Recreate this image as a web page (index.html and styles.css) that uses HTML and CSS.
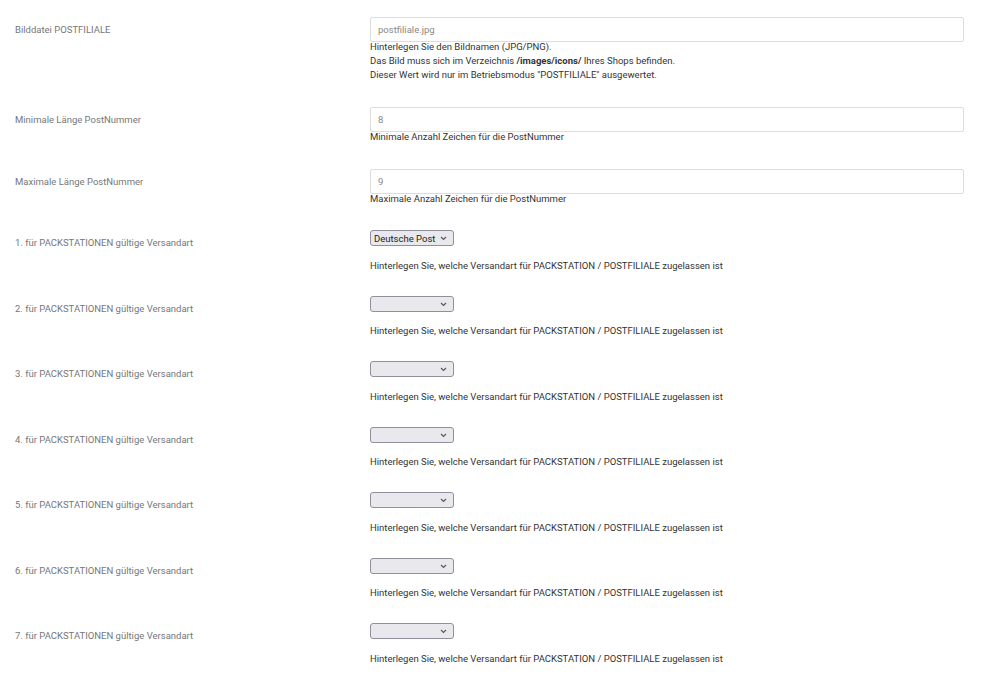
FILE: index.html
```html
<!DOCTYPE html>
<html lang="de">
<head>
  <meta charset="UTF-8">
  <title>Versandmodul Einstellungen</title>
  <link rel="stylesheet" href="styles.css">
</head>
<body>

  <div class="config">

    <div class="row text-row">
      <div class="label">Bilddatei POSTFILIALE</div>
      <div class="field">
        <input class="text-input" type="text" value="postfiliale.jpg">
        <div class="help">
          Hinterlegen Sie den Bildnamen (JPG/PNG).<br>
          Das Bild muss sich im Verzeichnis <b>/images/icons/</b> Ihres Shops befinden.<br>
          Dieser Wert wird nur im Betriebsmodus "POSTFILIALE" ausgewertet.
        </div>
      </div>
    </div>

    <div class="row text-row">
      <div class="label">Minimale Länge PostNummer</div>
      <div class="field">
        <input class="text-input" type="text" value="8">
        <div class="help">Minimale Anzahl Zeichen für die PostNummer</div>
      </div>
    </div>

    <div class="row text-row last-text">
      <div class="label">Maximale Länge PostNummer</div>
      <div class="field">
        <input class="text-input" type="text" value="9">
        <div class="help">Maximale Anzahl Zeichen für die PostNummer</div>
      </div>
    </div>

    <div class="row select-row">
      <div class="label">1. für PACKSTATIONEN gültige Versandart</div>
      <div class="field">
        <div class="select-wrap">
          <select class="ship-select"><option>Deutsche Post</option></select>
          <svg class="chevron" width="7" height="5" viewBox="0 0 7 5"><path d="M1 1l2.5 2.5L6 1" fill="none" stroke="#555" stroke-width="1.1"/></svg>
        </div>
        <div class="help">Hinterlegen Sie, welche Versandart für PACKSTATION / POSTFILIALE zugelassen ist</div>
      </div>
    </div>

    <div class="row select-row">
      <div class="label">2. für PACKSTATIONEN gültige Versandart</div>
      <div class="field">
        <div class="select-wrap">
          <select class="ship-select"><option></option></select>
          <svg class="chevron" width="7" height="5" viewBox="0 0 7 5"><path d="M1 1l2.5 2.5L6 1" fill="none" stroke="#555" stroke-width="1.1"/></svg>
        </div>
        <div class="help">Hinterlegen Sie, welche Versandart für PACKSTATION / POSTFILIALE zugelassen ist</div>
      </div>
    </div>

    <div class="row select-row">
      <div class="label">3. für PACKSTATIONEN gültige Versandart</div>
      <div class="field">
        <div class="select-wrap">
          <select class="ship-select"><option></option></select>
          <svg class="chevron" width="7" height="5" viewBox="0 0 7 5"><path d="M1 1l2.5 2.5L6 1" fill="none" stroke="#555" stroke-width="1.1"/></svg>
        </div>
        <div class="help">Hinterlegen Sie, welche Versandart für PACKSTATION / POSTFILIALE zugelassen ist</div>
      </div>
    </div>

    <div class="row select-row">
      <div class="label">4. für PACKSTATIONEN gültige Versandart</div>
      <div class="field">
        <div class="select-wrap">
          <select class="ship-select"><option></option></select>
          <svg class="chevron" width="7" height="5" viewBox="0 0 7 5"><path d="M1 1l2.5 2.5L6 1" fill="none" stroke="#555" stroke-width="1.1"/></svg>
        </div>
        <div class="help">Hinterlegen Sie, welche Versandart für PACKSTATION / POSTFILIALE zugelassen ist</div>
      </div>
    </div>

    <div class="row select-row">
      <div class="label">5. für PACKSTATIONEN gültige Versandart</div>
      <div class="field">
        <div class="select-wrap">
          <select class="ship-select"><option></option></select>
          <svg class="chevron" width="7" height="5" viewBox="0 0 7 5"><path d="M1 1l2.5 2.5L6 1" fill="none" stroke="#555" stroke-width="1.1"/></svg>
        </div>
        <div class="help">Hinterlegen Sie, welche Versandart für PACKSTATION / POSTFILIALE zugelassen ist</div>
      </div>
    </div>

    <div class="row select-row">
      <div class="label">6. für PACKSTATIONEN gültige Versandart</div>
      <div class="field">
        <div class="select-wrap">
          <select class="ship-select"><option></option></select>
          <svg class="chevron" width="7" height="5" viewBox="0 0 7 5"><path d="M1 1l2.5 2.5L6 1" fill="none" stroke="#555" stroke-width="1.1"/></svg>
        </div>
        <div class="help">Hinterlegen Sie, welche Versandart für PACKSTATION / POSTFILIALE zugelassen ist</div>
      </div>
    </div>

    <div class="row select-row">
      <div class="label">7. für PACKSTATIONEN gültige Versandart</div>
      <div class="field">
        <div class="select-wrap">
          <select class="ship-select"><option></option></select>
          <svg class="chevron" width="7" height="5" viewBox="0 0 7 5"><path d="M1 1l2.5 2.5L6 1" fill="none" stroke="#555" stroke-width="1.1"/></svg>
        </div>
        <div class="help">Hinterlegen Sie, welche Versandart für PACKSTATION / POSTFILIALE zugelassen ist</div>
      </div>
    </div>

  </div>

</body>
</html>
```

FILE: styles.css
```css
body {
  margin: 0;
  background: #fff;
  font-family: Roboto, "Liberation Sans", sans-serif;
  font-size: 9.5px;
  color: #333;
}

.config {
  padding: 17px 0 0 15px;
}

.row {
  display: flex;
}

.text-row {
  margin-bottom: 25px;
}

.last-text {
  margin-bottom: 24px;
}

.select-row {
  margin-bottom: 23px;
}

.label {
  width: 355px;
  flex-shrink: 0;
  color: #777;
  padding-top: 7px;
  line-height: 12px;
}

.field {
  width: 594px;
}

.text-input {
  display: block;
  box-sizing: border-box;
  width: 594px;
  height: 25px;
  margin: 0;
  padding: 0 7px;
  border: 1px solid #ddd;
  border-radius: 2px;
  font-family: inherit;
  font-size: 9.5px;
  color: #888;
  background: #fff;
  outline: none;
}

.help {
  line-height: 14px;
  margin-top: -2px;
  color: #333;
}

.help b {
  font-weight: 700;
}

.select-wrap {
  position: relative;
  width: 84px;
  height: 16px;
}

.ship-select {
  appearance: none;
  -webkit-appearance: none;
  box-sizing: border-box;
  width: 84px;
  height: 16px;
  margin: 0;
  padding: 0 3px;
  border: 1px solid #8f8f9d;
  border-radius: 3px;
  background: #e9e9ed;
  font-family: inherit;
  font-size: 9.5px;
  color: #222;
}

.chevron {
  position: absolute;
  right: 7px;
  top: 6px;
}

.select-row .help {
  margin-top: 12.5px;
}
```
